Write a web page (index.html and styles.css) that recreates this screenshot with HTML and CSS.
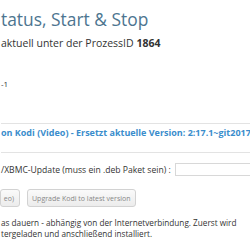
FILE: index.html
```html
<!DOCTYPE html>
<html lang="de">
<head>
<meta charset="utf-8">
<title>Kodi Status, Start &amp; Stop</title>
<link rel="stylesheet" href="styles.css">
</head>
<body>
<div class="page">
    <h2 class="title">tatus, Start &amp; Stop</h2>
    <p class="status">aktuell unter der ProzessID <b>1864</b></p>
    <p class="version">-1</p>

    <div class="section upgrade">
        <div class="upgrade-title">on Kodi (Video) - Ersetzt aktuelle Version: 2:17.1~git20170321</div>
    </div>

    <div class="section">
        <form class="upload">
            <label for="deb">/XBMC-Update (muss ein .deb Paket sein) :</label>
            <input type="text" id="deb" class="file">
        </form>
        <div class="buttons">
            <button class="btn btn-cut">eo)</button>
            <button class="btn">Upgrade Kodi to latest version</button>
        </div>
        <p class="note">as dauern - abhängig von der Internetverbindung. Zuerst wird<br>tergeladen und anschließend installiert.</p>
    </div>
</div>
</body>
</html>
```

FILE: styles.css
```css
body {
    margin: 0;
    background-color: #fff;
    font-family: "Open Sans", "Liberation Sans", sans-serif;
    color: #333;
    overflow: hidden;
}
.page {
    width: 250px;
    height: 250px;
    overflow: hidden;
    padding-left: 1px;
}
.title {
    font-size: 17.4px;
    font-weight: normal;
    color: #4d7590;
    margin: 0;
    padding-top: 9px;
    line-height: 20px;
    white-space: nowrap;
}
.status {
    font-size: 10.5px;
    margin: 7px 0 0 0;
    line-height: 14px;
    white-space: nowrap;
}
.status b {
    font-weight: bold;
}
.version {
    font-size: 8px;
    margin: 29px 0 0 0;
    line-height: 10px;
    white-space: nowrap;
}
.section {
    border-top: 1px solid #e3e3e3;
}
.upgrade {
    margin-top: 34px;
    height: 28px;
}
.upgrade-title {
    font-size: 9px;
    font-weight: bold;
    color: #3a8dcc;
    line-height: 12px;
    margin-top: 3px;
    white-space: nowrap;
}
.upload {
    display: flex;
    align-items: center;
    margin: 10px 0 0 0;
    white-space: nowrap;
    font-size: 8.6px;
    line-height: 12px;
}
.file {
    margin-left: 4px;
    width: 100px;
    height: 13px;
    box-sizing: border-box;
    border: 1px solid #d8d8d8;
    background: #fff;
    padding: 0;
    flex-shrink: 0;
}
.buttons {
    display: flex;
    gap: 7px;
    margin-top: 13px;
    margin-left: -1px;
}
.btn {
    appearance: none;
    -webkit-appearance: none;
    height: 18px;
    padding: 0 4px;
    border: 1px solid #d2d2d2;
    border-radius: 3px;
    background: linear-gradient(#fafafa, #ececec);
    font-family: "Open Sans", sans-serif;
    font-size: 7px;
    color: #888;
    white-space: nowrap;
}
.btn-cut {
    padding: 0 5px 0 0;
    width: 20px;
    text-align: right;
}
.note {
    font-size: 8.2px;
    line-height: 11px;
    margin: 10px 0 0 0;
    white-space: nowrap;
}
```
